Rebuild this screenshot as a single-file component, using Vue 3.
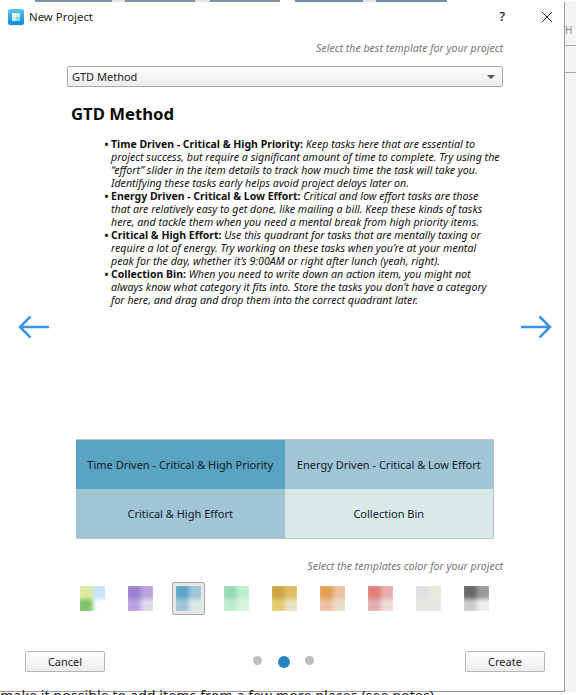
<script setup>
const items = [
  { title: 'Time Driven - Critical & High Priority:', body: 'Keep tasks here that are essential to\nproject success, but require a significant amount of time to complete. Try using the\n“effort” slider in the item details to track how much time the task will take you.\nIdentifying these tasks early helps avoid project delays later on.' },
  { title: 'Energy Driven - Critical & Low Effort:', body: 'Critical and low effort tasks are those\nthat are relatively easy to get done, like mailing a bill. Keep these kinds of tasks\nhere, and tackle them when you need a mental break from high priority items.' },
  { title: 'Critical & High Effort:', body: 'Use this quadrant for tasks that are mentally taxing or\nrequire a lot of energy. Try working on these tasks when you’re at your mental\npeak for the day, whether it’s 9:00AM or right after lunch (yeah, right).' },
  { title: 'Collection Bin:', body: 'When you need to write down an action item, you might not\nalways know what category it fits into. Store the tasks you don’t have a category\nfor here, and drag and drop them into the correct quadrant later.' },
]
const cells = [
  { label: 'Time Driven - Critical & High Priority', color: '#5aa3c1' },
  { label: 'Energy Driven - Critical & Low Effort', color: '#a2c5d6' },
  { label: 'Critical & High Effort', color: '#a2c5d6' },
  { label: 'Collection Bin', color: '#d9e9e8' },
]
const swatches = [
  ['#dcea9e', '#c6e4fb', '#7cc36a', '#ffffff'],
  ['#9a80cf', '#b9a2e0', '#b9a2e0', '#dcd9ec'],
  ['#5aa5c6', '#9ec4d6', '#a2c5d6', '#d8e9e9'],
  ['#98d9b8', '#c0efd0', '#bdeccb', '#d7f5dc'],
  ['#cda445', '#e0bd62', '#e3cc6d', '#e6e3c5'],
  ['#e0a04f', '#eebfa2', '#eebfa2', '#eadccb'],
  ['#dd7f78', '#e8adad', '#e2aeb0', '#f0dcd6'],
  ['#dedede', '#e8e8dc', '#e6e6de', '#e6e6e6'],
  ['#666666', '#999999', '#cccccc', '#eeeeee'],
]
const strip = [
  { w: 35, c: '#fff' }, { w: 77, c: '#7f93a6' }, { w: 13, c: '#e6e6e6' }, { w: 70, c: '#7f93a6' },
  { w: 15, c: '#e6e6e6' }, { w: 70, c: '#7f93a6' }, { w: 15, c: '#fff' }, { w: 68, c: '#6f8fb0' },
  { w: 13, c: '#e6e6e6' }, { w: 71, c: '#6f8fb0' },
]
</script>

<template>
  <div class="page">
    <div class="strip">
      <i v-for="(s, i) in strip" :key="i" :style="{ width: s.w + 'px', background: s.c }"></i>
    </div>
    <div class="middle">
      <div class="window">
        <header class="titlebar">
          <svg class="appicon" width="16" height="16" viewBox="0 0 16 16">
            <defs>
              <linearGradient id="ag" x1="0" y1="0" x2="0" y2="1">
                <stop offset="0" stop-color="#5cc8e8" />
                <stop offset="1" stop-color="#0f86d8" />
              </linearGradient>
            </defs>
            <rect width="16" height="16" rx="2.5" fill="url(#ag)" />
            <rect x="4" y="4" width="4" height="4" fill="#e8f8fb" />
            <rect x="8" y="4" width="4" height="4" fill="#c4eef5" />
            <rect x="4" y="8" width="4" height="4" fill="#c4eef5" />
            <rect x="8" y="8" width="4" height="4" fill="#8fd8f0" />
          </svg>
          <span class="title">New Project</span>
          <span class="help">?</span>
          <svg class="close" width="12" height="12" viewBox="0 0 12 12">
            <path d="M1 1 L11 11 M11 1 L1 11" stroke="#222" stroke-width="1" fill="none" />
          </svg>
        </header>

        <div class="carousel">
          <div class="side left">
            <svg width="32" height="24" viewBox="0 0 32 24">
              <path d="M31 12 H2 M12.5 1.5 L2 12 L12.5 22.5" stroke="#3b92e6" stroke-width="2.5" fill="none" />
            </svg>
          </div>

          <main class="center">
            <p class="hint">Select the best template for your project</p>
            <div class="select">
              <span>GTD Method</span>
              <i class="caret"></i>
            </div>
            <h1>GTD Method</h1>
            <ul class="list">
              <li v-for="it in items" :key="it.title"><b>{{ it.title }}</b> <em>{{ it.body }}</em></li>
            </ul>
            <div class="matrix">
              <div v-for="c in cells" :key="c.label" class="cell" :style="{ background: c.color }">{{ c.label }}</div>
            </div>
            <p class="hint second">Select the templates color for your project</p>
            <div class="swatches">
              <div v-for="(s, i) in swatches" :key="i" class="tile" :class="{ active: i === 2 }">
                <div class="thumb">
                  <div class="blur">
                    <i v-for="(col, j) in s" :key="j" :style="{ background: col }"></i>
                  </div>
                </div>
              </div>
            </div>
          </main>

          <div class="side right">
            <svg width="32" height="24" viewBox="0 0 32 24">
              <path d="M1 12 H30 M19.5 1.5 L30 12 L19.5 22.5" stroke="#3b92e6" stroke-width="2.5" fill="none" />
            </svg>
          </div>
        </div>

        <footer class="footer">
          <button class="btn">Cancel</button>
          <div class="dots">
            <i class="dot"></i>
            <i class="dot big"></i>
            <i class="dot"></i>
          </div>
          <button class="btn">Create</button>
        </footer>
      </div>
      <div class="behind">
        <span class="frag">H</span>
        <i class="rule"></i>
        <i class="rule two"></i>
      </div>
    </div>
    <div class="below">make it possible to add items from a few more places (see notes)</div>
  </div>
</template>

<style scoped>
.page {
  width: 576px;
  height: 695px;
  overflow: hidden;
  background: #fff;
  font-family: "Noto Sans", "Open Sans", sans-serif;
  color: #111;
  display: flex;
  flex-direction: column;
}
.strip { display: flex; height: 2px; flex: none; }
.strip i { display: block; height: 2px; }
.middle { display: flex; flex: none; height: 690px; }
.window {
  width: 565px;
  height: 690px;
  box-sizing: border-box;
  border-right: 1px solid #9a9a9a;
  border-bottom: 1px solid #9a9a9a;
  background: #fff;
  flex: none;
}
.titlebar {
  height: 32px;
  display: flex;
  align-items: center;
  padding: 0 0 3px 8px;
  box-sizing: border-box;
}
.appicon { flex: none; }
.title { margin-left: 5px; font-size: 11.4px; color: #222; }
.help { margin-left: auto; font-size: 13px; font-weight: 500; color: #222; padding-bottom: 2px; }
.close { margin: 0 11px 0 36px; }
.carousel { display: flex; align-items: center; }
.side { flex: none; display: flex; padding-top: 4px; }
.side.left { width: 67px; padding-left: 18px; box-sizing: border-box; }
.side.right { width: 61px; padding-left: 17px; box-sizing: border-box; }
.center { width: 436px; flex: none; }
.hint {
  margin: 7px 0 0;
  text-align: right;
  font-size: 10.6px;
  line-height: 14px;
  font-style: italic;
  color: #777;
}
.hint.second { margin-top: 20px; }
.select {
  margin-top: 11px;
  height: 21px;
  box-sizing: border-box;
  border: 1px solid #a9a9a9;
  border-radius: 2px;
  background: linear-gradient(#fff, #ececec);
  display: flex;
  align-items: center;
  justify-content: space-between;
  padding: 0 7px 0 4px;
  font-size: 11px;
  color: #222;
}
.caret {
  width: 0;
  height: 0;
  border-left: 4px solid transparent;
  border-right: 4px solid transparent;
  border-top: 4px solid #555;
}
h1 {
  margin: 15px 0 0 4px;
  font-size: 16.7px;
  line-height: 24px;
  font-weight: 700;
  color: #0a0a0a;
}
.list {
  margin: 12px 0 0;
  padding: 0 0 0 44px;
  list-style: none;
  font-size: 10.4px;
  line-height: 13px;
  color: #111;
}
.list li::before {
  content: "•";
  display: inline-block;
  width: 6.5px;
  margin-left: -6.5px;
  font-weight: 700;
  line-height: 1;
}
.list b { font-weight: 700; font-size: 10.5px; line-height: 1; }
.list em { font-style: italic; font-size: 10.65px; line-height: 1; white-space: pre-line; }
.matrix {
  margin: 132px 9px 0;
  height: 100px;
  display: grid;
  grid-template-columns: 1fr 1fr;
  grid-template-rows: 1fr 1fr;
  border-right: 1px solid #bfc6ca;
  border-bottom: 1px solid #bfc6ca;
  border-top: 1px solid #bfc6ca;
  box-sizing: border-box;
}
.cell {
  display: flex;
  align-items: center;
  justify-content: center;
  font-size: 11px;
  color: #10202c;
}
.swatches {
  margin: 9px 0 0 9px;
  display: flex;
  gap: 15px;
}
.tile {
  width: 33px;
  height: 33px;
  box-sizing: border-box;
  border: 1px solid transparent;
  padding: 3px;
  border-radius: 2px;
}
.tile.active { background: #e6e6e6; border-color: #aaa; }
.thumb {
  width: 25px;
  height: 25px;
  overflow: hidden;
}
.blur {
  width: 25px;
  height: 25px;
  display: grid;
  grid-template-columns: 1fr 1fr;
  grid-template-rows: 1fr 1fr;
  filter: blur(1.6px);
  transform: scale(1.2);
}
.blur i { display: block; }
.footer {
  margin-top: 36px;
  padding: 0 19px 0 25px;
  display: flex;
  align-items: flex-start;
  justify-content: space-between;
}
.btn {
  width: 80px;
  height: 21px;
  box-sizing: border-box;
  border: 1px solid #b5b5b5;
  border-radius: 2px;
  background: linear-gradient(#fff, #ececec);
  font-family: inherit;
  font-size: 11px;
  color: #222;
  padding: 0;
}
.dots { display: flex; align-items: flex-start; margin-top: 5px; margin-right: 3px; }
.dot { display: block; width: 9px; height: 9px; border-radius: 50%; background: #bdbdbd; }
.dot.big { width: 12px; height: 12px; background: #2a83bd; margin: 0 15px 0 16px; }
.behind { flex: 1; background: #f4f4f4; }
.frag { display: block; margin-top: 22px; font-size: 10px; line-height: 12px; color: #888; }
.rule { display: block; height: 1px; background: #aaa; margin-top: 9px; }
.rule.two { margin-top: 26px; }
.below {
  flex: none;
  margin-top: -3px;
  height: 14px;
  font-size: 14.3px;
  line-height: 14px;
  color: #222;
  white-space: nowrap;
}
</style>

<style>
html, body { margin: 0; background: #fff; }
</style>
